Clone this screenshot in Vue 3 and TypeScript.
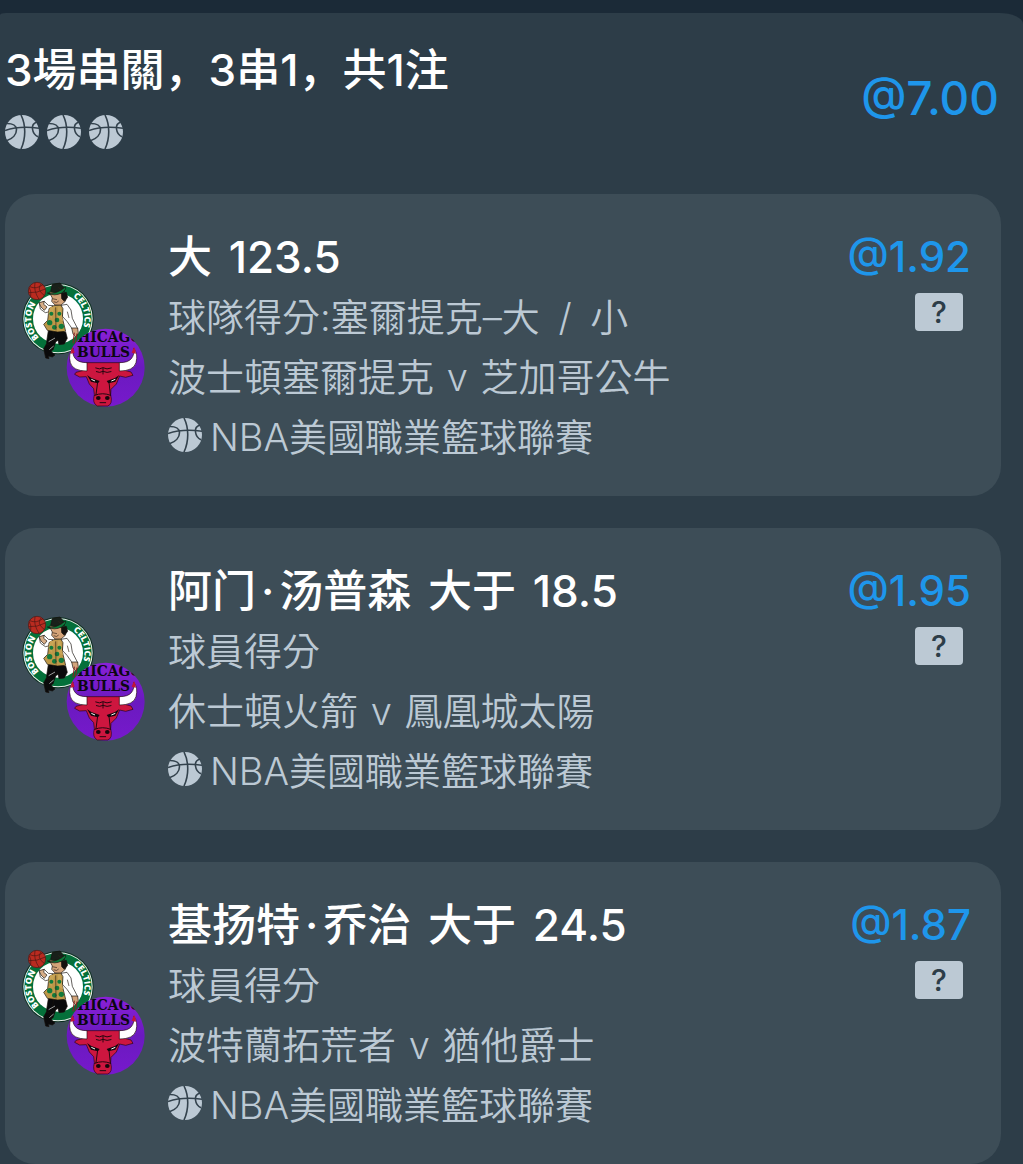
<script setup lang="ts">
interface Leg {
  pick: string
  market: string
  match: string
  league: string
  odds: string
}

const title = '3場串關，3串1，共1注'
const totalOdds = '@7.00'

const legs: Leg[] = [
  {
    pick: '大 123.5',
    market: '球隊得分:塞爾提克–大 / 小',
    match: '波士頓塞爾提克 v 芝加哥公牛',
    league: 'NBA美國職業籃球聯賽',
    odds: '@1.92',
  },
  {
    pick: '阿门·汤普森 大于 18.5',
    market: '球員得分',
    match: '休士頓火箭 v 鳳凰城太陽',
    league: 'NBA美國職業籃球聯賽',
    odds: '@1.95',
  },
  {
    pick: '基扬特·乔治 大于 24.5',
    market: '球員得分',
    match: '波特蘭拓荒者 v 猶他爵士',
    league: 'NBA美國職業籃球聯賽',
    odds: '@1.87',
  },
]

// Splits a line into words, keeping each trailing space and the middle dot.
function words(text: string): string[] {
  return text.split(/(?<= )|(?=·)|(?<=·)/)
}
</script>

<template>
  <div class="page">
    <svg class="defs" width="0" height="0" aria-hidden="true">
      <defs>
        <linearGradient id="bulls-bg" x1="0" y1="0" x2="0" y2="1">
          <stop offset="0" stop-color="#8a20d8" />
          <stop offset="0.5" stop-color="#6a1abf" />
          <stop offset="1" stop-color="#7719cc" />
        </linearGradient>
        <clipPath id="bulls-clip"><circle cx="320" cy="293" r="117" /></clipPath>
        <path id="arc-left" d="M120 203 A80 80 0 0 1 137 77" />
        <path id="arc-right" d="M222 80 A80 80 0 0 1 217 215" />
        <symbol id="ball" viewBox="0 0 34 34">
          <circle cx="17" cy="17" r="17" fill="#bcc9d4" />
          <g fill="none" stroke="#33424d" stroke-width="1.6">
            <path d="M16 0C21 10 21 23 16 34" />
            <path d="M0 15.500C10 12 22 11.500 34 13.200" />
            <path d="M2 8.500C8 8.500 11.500 11 11.500 14.500C11.500 19 8 23.500 2 25.500" />
            <path d="M32 7C28.500 8 27 10.500 27.500 14C28 18 30 20.500 33 21.800" />
          </g>
        </symbol>
        <symbol id="teams" viewBox="60 30 384 390">
          <circle cx="177" cy="146" r="107" fill="#0b2f20" />
          <circle cx="177" cy="146" r="104" fill="#e8f0ea" />
          <circle cx="177" cy="146" r="101" fill="#04703a" />
          <circle cx="177" cy="146" r="75" fill="#fff" />
          <g class="celtics-text">
            <text><textPath href="#arc-left">BOSTON</textPath></text>
            <text><textPath href="#arc-right">CELTICS</textPath></text>
          </g>
          <g stroke="#17120e" stroke-width="2" stroke-linejoin="round">
            <path d="M148 182L194 182L190 200L170 216L162 240L142 242L143 214Z" fill="#0a0a0b" />
            <path d="M165 184L200 186L205 205L196 222L180 224L176 207L158 214Z" fill="#0a0a0b" />
            <path d="M134 236L142 222L156 226L158 246L168 255L160 261L148 258L150 266L140 264Z" fill="#0a0a0b" />
            <path d="M121 100L136 94L148 106L162 107L158 124L139 128L124 117Z" fill="#fff" />
            <path d="M186 106L204 103L216 120L220 145L236 176L225 184L204 154L191 140Z" fill="#fff" />
            <path d="M150 116L164 107L185 104L192 116L190 143L200 184L176 186L145 181L134 163L146 151Z" fill="#bd9848" />
            <path d="M154 111L148 129L157 147L165 116L176 109L178 147L192 154L184 109Z" fill="#c9a557" stroke="none" />
            <path d="M150 66L190 70L202 82L199 94L186 105L168 105L158 94L160 84Z" fill="#d4a378" />
            <path d="M187 70L202 67L206 82L196 94L188 86Z" fill="#15110e" />
            <path d="M155 64L160 43L183 39L197 56L196 65L174 67Z" fill="#18201a" />
            <path d="M145 69Q170 75 199 51Q204 57 188 69Q167 80 145 69Z" fill="#0d7a3b" />
            <path d="M120 98L126 111L136 121L144 111L134 103L136 94Z" fill="#d8ae87" />
            <path d="M218 174L236 174L238 190L230 201L222 192Z" fill="#d2a47c" />
          </g>
          <g fill="#127a3c">
            <circle cx="157" cy="131" r="6" /><circle cx="152" cy="158" r="8" />
            <circle cx="174" cy="150" r="7" /><circle cx="181" cy="131" r="6" />
            <circle cx="187" cy="169" r="8" /><circle cx="166" cy="172" r="7" />
          </g>
          <path d="M160 86L174 89M164 95Q173 101 179 93M170 112L171 181M205 125L210 144M178 52L188 60" fill="none" stroke="#33241a" stroke-width="2" />
          <path d="M149 215L168 204M151 239L164 228" stroke="#e6e8e8" stroke-width="2" />
          <path d="M226 188L222 220M234 190L228 226" stroke="#8b1f22" stroke-width="3" />
          <circle cx="114" cy="63" r="26" fill="#b92b20" stroke="#4a1713" stroke-width="2" />
          <path d="M92 50Q112 59 132 44M89 68Q114 70 139 57M108 38Q103 62 120 88M126 42Q111 59 137 77M95 80Q98 66 91 53" fill="none" stroke="#4a1713" stroke-width="2" />

          <circle cx="320" cy="293" r="117" fill="url(#bulls-bg)" />
          <g clip-path="url(#bulls-clip)" class="bulls-text">
            <text x="202" y="216">CHICAGO</text>
            <text x="234" y="260">BULLS</text>
          </g>
          <g stroke="#26060f" stroke-width="2" stroke-linejoin="round">
            <path d="M262 278L365 278L366 298L396 306L402 316L380 322L362 318L352 342L336 358L335 374Q342 403 326 408L295 408Q279 400 286 374L284 356L271 342L262 320L242 321L227 313L231 307L258 300Z" fill="#cd163f" />
            <path d="M222 235Q207 252 214 278Q221 303 264 303L264 278Q239 278 229 266Q219 254 222 235Z" fill="#fff" />
            <path d="M404 235Q418 252 411 278Q404 303 361 303L361 278Q387 278 397 266Q407 254 404 235Z" fill="#fff" />
          </g>
          <path d="M221 231Q214 241 216 251L227 248ZM405 231Q412 241 410 251L398 248Z" fill="#c21438" />
          <g fill="none" stroke="#26060f" stroke-width="3" stroke-linecap="round">
            <path d="M290 294Q302 300 312 293Q323 300 337 294M292 305Q302 310 312 304Q324 310 336 305M312 295L312 312M296 336L291 374M330 336L334 374M287 376Q311 366 335 376M303 398L320 398" />
          </g>
          <path d="M264 315L277 324L302 333L297 340L276 335ZM361 315L348 324L323 333L328 340L349 335Z" fill="#0f080c" />
          <path d="M277 328L288 333M337 333L349 328" stroke="#fff" stroke-width="3" />
          <ellipse cx="298" cy="384" rx="7" ry="6" fill="#16070b" />
          <ellipse cx="325" cy="384" rx="7" ry="6" fill="#16070b" />
        </symbol>
      </defs>
    </svg>

    <main class="panel">
      <header class="summary">
        <div>
          <h1 class="heading">{{ title }}</h1>
          <div class="balls">
            <svg v-for="n in legs.length" :key="n" class="ball"><use href="#ball" /></svg>
          </div>
        </div>
        <span class="total">{{ totalOdds }}</span>
      </header>

      <ul class="legs">
        <li v-for="leg in legs" :key="leg.pick" class="leg">
          <svg class="teams" role="img" aria-label="Boston Celtics, Chicago Bulls"><use href="#teams" /></svg>
          <div class="info">
            <h2 class="heading"><span v-for="(w, i) in words(leg.pick)" :key="i" class="word">{{ w }}</span></h2>
            <p class="line market"><span v-for="(w, i) in words(leg.market)" :key="i" class="word">{{ w }}</span></p>
            <p class="line match"><span v-for="(w, i) in words(leg.match)" :key="i" class="word">{{ w }}</span></p>
            <p class="line league"><svg class="ball"><use href="#ball" /></svg>{{ leg.league }}</p>
          </div>
          <div class="side">
            <span class="odds">{{ leg.odds }}</span>
            <button type="button" class="help">?</button>
          </div>
        </li>
      </ul>
    </main>
  </div>
</template>

<style>
body {
  margin: 0;
  background: #2d3d48;
}
</style>

<style scoped>
.page {
  box-sizing: border-box;
  min-height: 100vh;
  padding-top: 13px;
  background: #1b2a37;
  font-family: Inter, "Noto Sans CJK SC", sans-serif;
  color: #fff;
}
.defs {
  position: absolute;
}
.panel {
  padding: 27px 22px 0 5px;
  background: #2d3d48;
  border-radius: 6px 24px 0 0 / 2px 11px 0 0;
}
.summary {
  display: flex;
  justify-content: space-between;
  align-items: flex-start;
  margin-bottom: 45px;
}
.heading {
  margin: 0;
  font-size: 44px;
  line-height: 60px;
  font-weight: 500;
  white-space: pre;
}
.word + .word {
  margin-left: 5px;
}
.market .word + .word {
  margin-left: 8px;
}
.match .word + .word {
  margin-left: 2px;
}
.balls {
  display: flex;
  gap: 8px;
  margin-top: 15px;
}
.ball {
  display: block;
  flex: none;
  width: 34px;
  height: 34px;
}
.total,
.odds {
  line-height: 60px;
  font-weight: 500;
  color: #1e96eb;
}
.total {
  margin: 28px 2px 0 0;
  font-size: 46px;
}
.legs {
  display: flex;
  flex-direction: column;
  gap: 32px;
  margin: 0;
  padding: 0;
  list-style: none;
}
.leg {
  display: flex;
  padding: 33px 30px 29px 14px;
  background: #3d4d57;
  border-radius: 30px;
}
.teams {
  flex: none;
  align-self: center;
  width: 128px;
  height: 130px;
  margin: 0 21px 4px 0;
}
.celtics-text {
  font-family: "Open Sans", sans-serif;
  font-size: 26px;
  font-weight: 800;
  fill: #fff;
}
.bulls-text {
  font-family: "DejaVu Serif Condensed", "DejaVu Serif", serif;
  font-size: 46px;
  font-weight: 700;
  fill: #0c0712;
}
.info {
  flex: 1;
  min-width: 0;
}
.line {
  margin: 0;
  font-family: Inter, "Noto Sans CJK TC", sans-serif;
  font-size: 38px;
  line-height: 60px;
  font-weight: 350;
  color: #bcc9d4;
  white-space: pre;
}
.league {
  display: flex;
  align-items: center;
  gap: 8px;
}
.league .ball {
  margin-bottom: 4px;
}
.side {
  display: flex;
  flex-direction: column;
  align-items: flex-end;
}
.odds {
  font-size: 42px;
}
.help {
  width: 48px;
  height: 38px;
  margin: 6px 8px 0 0;
  padding: 0;
  border: 0;
  border-radius: 4px;
  background: #bcc9d4;
  font-family: Inter, sans-serif;
  font-size: 30px;
  line-height: 38px;
  font-weight: 500;
  color: #2d3d48;
}
</style>
